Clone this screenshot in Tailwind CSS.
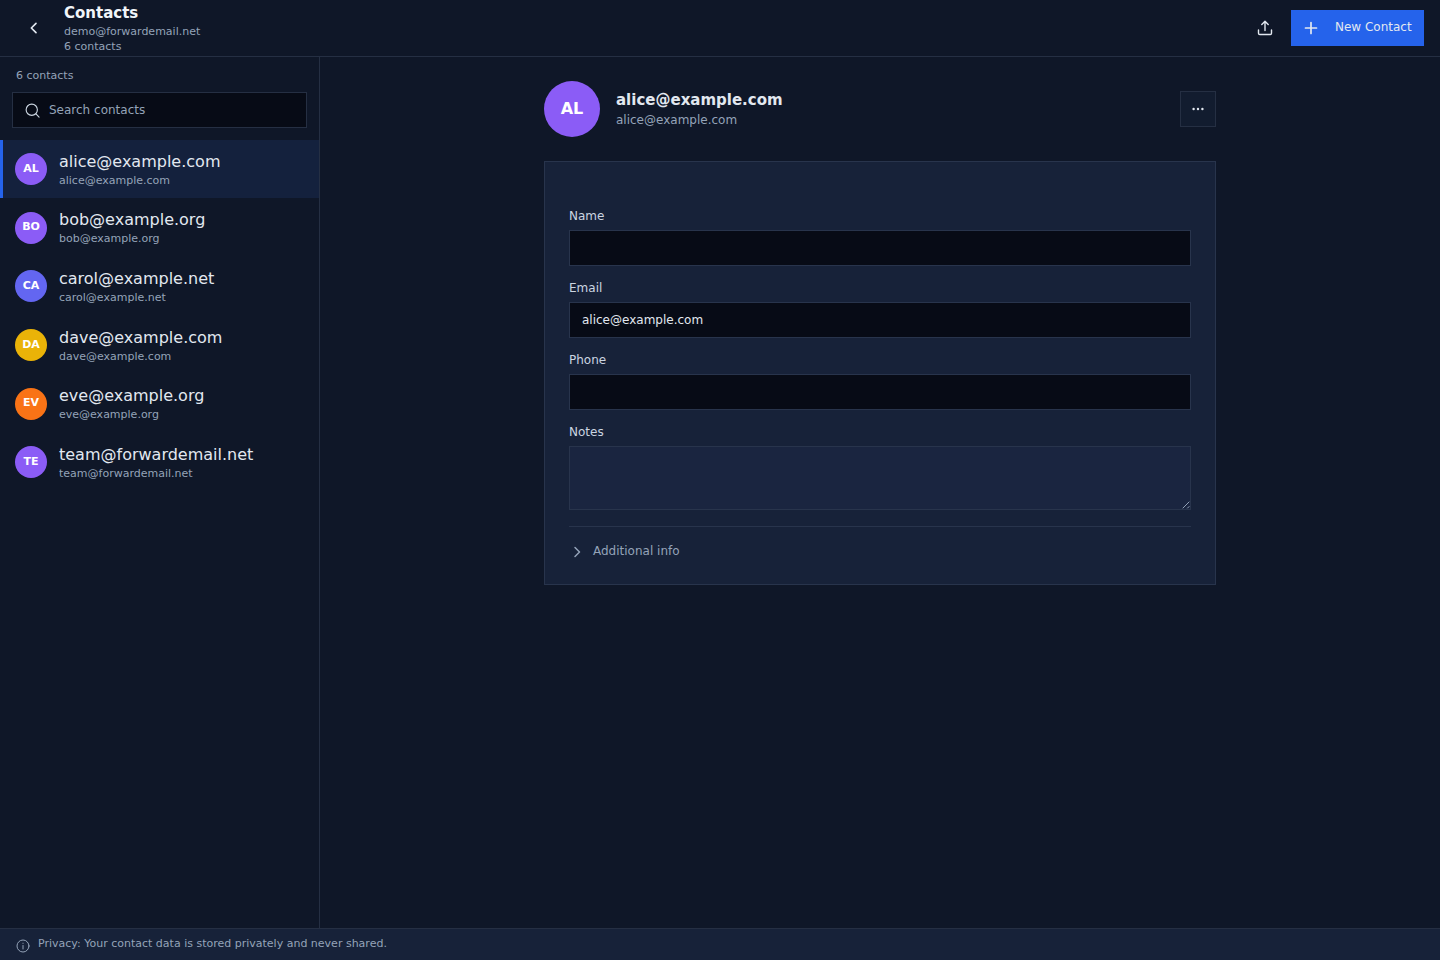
<!DOCTYPE html>
<html>
<head>
<title>Contacts</title>
<meta charset="UTF-8" />
<script src="https://cdn.jsdelivr.net/npm/@tailwindcss/browser@4"></script>
</head>
<body class="bg-[#0f1728] text-white font-['DejaVu_Sans',sans-serif]">
<div class="flex flex-col h-[960px] overflow-hidden">
    <!-- top bar -->
    <header class="flex items-center justify-between h-[57px] shrink-0 border-b border-[#252f43] pl-[16px] pr-[16px]">
        <div class="flex items-center">
            <button type="button" class="w-[36px] h-[36px] flex items-center justify-center text-[#e2e8f0]">
                <svg class="w-[16px] h-[16px]" viewBox="0 0 24 24" fill="none" stroke="currentColor" stroke-width="2.5" stroke-linecap="round" stroke-linejoin="round"><path d="M15 5l-7 7 7 7"/></svg>
            </button>
            <div class="ml-[12px] mb-[1px] flex flex-col">
                <h1 class="text-[15px] leading-[22px] font-bold text-[#f1f5f9]">Contacts</h1>
                <div class="text-[11px] leading-[15px] text-[#94a3b8]">demo@forwardemail.net</div>
                <div class="text-[11px] leading-[15px] text-[#94a3b8]">6 contacts</div>
            </div>
        </div>
        <div class="flex items-center">
            <button type="button" class="w-[36px] h-[36px] flex items-center justify-center text-[#e2e8f0] mr-[8px]">
                <svg class="w-[16px] h-[16px]" viewBox="0 0 16 16" fill="none" stroke="currentColor" stroke-width="1.4" stroke-linecap="round" stroke-linejoin="round"><path d="M8 10.5V1.5M4.8 4.5L8 1.3l3.2 3.2M1.5 10v3.2c0 .8.5 1.3 1.3 1.3h10.4c.8 0 1.3-.5 1.3-1.3V10"/></svg>
            </button>
            <button type="button" class="flex items-center h-[36px] w-[133px] bg-[#2563eb] text-[#e2e8f0] text-[12px] pl-[13px]">
                <svg class="w-[14px] h-[14px]" viewBox="0 0 14 14" fill="none" stroke="currentColor" stroke-width="1.7" stroke-linecap="round"><path d="M7 1.5v11M1.5 7h11"/></svg>
                <span class="ml-[17px] mb-[2px]">New Contact</span>
            </button>
        </div>
    </header>

    <div class="flex flex-1 min-h-0">
        <!-- sidebar -->
        <aside class="w-[320px] shrink-0 border-r border-[#252f43] flex flex-col">
            <div class="text-[11px] leading-[15px] text-[#94a3b8] pl-[16px] pt-[11px]">6 contacts</div>
            <div class="mx-[12px] mt-[9px] h-[36px] bg-[#070b16] border border-[#252f43] flex items-center pl-[12px]">
                <svg class="w-[15px] h-[15px] text-[#cbd5e1]" viewBox="0 0 16 16" fill="none" stroke="currentColor" stroke-width="1.2" stroke-linecap="round"><circle cx="7.2" cy="7.2" r="6"/><path d="M11.7 11.7l3.3 3.3"/></svg>
                <span class="ml-[9px] text-[12px] text-[#94a3b8]">Search contacts</span>
            </div>
            <ul class="mt-[11.67px]">
                <li class="flex items-center h-[58.67px] bg-[#14213d] border-l-[3px] border-[#2563eb] pl-[12px]">
                    <div class="w-[32px] h-[32px] rounded-full bg-[#8b5cf6] flex items-center justify-center text-[11px] font-bold">AL</div>
                    <div class="ml-[12px] mt-[0.67px]"><div class="text-[16px] leading-[22px] text-[#e2e8f0]">alice@example.com</div><div class="text-[11px] leading-[15px] text-[#94a3b8]">alice@example.com</div></div>
                </li>
                <li class="flex items-center h-[58.67px] pl-[15px]">
                    <div class="w-[32px] h-[32px] rounded-full bg-[#8b5cf6] flex items-center justify-center text-[11px] font-bold">BO</div>
                    <div class="ml-[12px] mt-[0.67px]"><div class="text-[16px] leading-[22px] text-[#e2e8f0]">bob@example.org</div><div class="text-[11px] leading-[15px] text-[#94a3b8]">bob@example.org</div></div>
                </li>
                <li class="flex items-center h-[58.67px] pl-[15px]">
                    <div class="w-[32px] h-[32px] rounded-full bg-[#6366f1] flex items-center justify-center text-[11px] font-bold">CA</div>
                    <div class="ml-[12px] mt-[0.67px]"><div class="text-[16px] leading-[22px] text-[#e2e8f0]">carol@example.net</div><div class="text-[11px] leading-[15px] text-[#94a3b8]">carol@example.net</div></div>
                </li>
                <li class="flex items-center h-[58.67px] pl-[15px]">
                    <div class="w-[32px] h-[32px] rounded-full bg-[#eab308] flex items-center justify-center text-[11px] font-bold">DA</div>
                    <div class="ml-[12px] mt-[0.67px]"><div class="text-[16px] leading-[22px] text-[#e2e8f0]">dave@example.com</div><div class="text-[11px] leading-[15px] text-[#94a3b8]">dave@example.com</div></div>
                </li>
                <li class="flex items-center h-[58.67px] pl-[15px]">
                    <div class="w-[32px] h-[32px] rounded-full bg-[#f97316] flex items-center justify-center text-[11px] font-bold">EV</div>
                    <div class="ml-[12px] mt-[0.67px]"><div class="text-[16px] leading-[22px] text-[#e2e8f0]">eve@example.org</div><div class="text-[11px] leading-[15px] text-[#94a3b8]">eve@example.org</div></div>
                </li>
                <li class="flex items-center h-[58.67px] pl-[15px]">
                    <div class="w-[32px] h-[32px] rounded-full bg-[#8b5cf6] flex items-center justify-center text-[11px] font-bold">TE</div>
                    <div class="ml-[12px] mt-[0.67px]"><div class="text-[16px] leading-[22px] text-[#e2e8f0]">team@forwardemail.net</div><div class="text-[11px] leading-[15px] text-[#94a3b8]">team@forwardemail.net</div></div>
                </li>
            </ul>
        </aside>

        <!-- detail -->
        <main class="flex-1 min-w-0 pt-[24px]">
            <div class="w-[672px] mx-auto">
                <div class="flex items-center justify-between">
                    <div class="flex items-center">
                        <div class="w-[56px] h-[56px] rounded-full bg-[#8b5cf6] flex items-center justify-center text-[16px] font-bold">AL</div>
                        <div class="ml-[16px] mb-[1px]">
                            <div class="text-[15px] leading-[22px] font-bold text-[#e2e8f0]">alice@example.com</div>
                            <div class="mt-[1px] text-[12px] leading-[17px] text-[#94a3b8]">alice@example.com</div>
                        </div>
                    </div>
                    <button type="button" class="w-[36px] h-[36px] bg-[#121c2f] border border-[#252f43] flex items-center justify-center">
                        <svg class="w-[12px] h-[4px]" viewBox="0 0 12 4" fill="#e2e8f0"><circle cx="1.6" cy="2" r="1.2"/><circle cx="6" cy="2" r="1.2"/><circle cx="10.4" cy="2" r="1.2"/></svg>
                    </button>
                </div>
                <form class="mt-[24px] bg-[#172239] border border-[#28344c] px-[24px] pt-[46px] h-[424px]">
                    <label class="block text-[12px] leading-[16px] text-[#cbd5e1]">Name</label>
                    <div class="mt-[6px] h-[36px] bg-[#070b16] border border-[#28344c]"></div>
                    <label class="block mt-[14px] text-[12px] leading-[16px] text-[#cbd5e1]">Email</label>
                    <div class="mt-[6px] h-[36px] bg-[#070b16] border border-[#28344c] flex items-center pl-[12px] text-[12px] text-[#e2e8f0]">alice@example.com</div>
                    <label class="block mt-[14px] text-[12px] leading-[16px] text-[#cbd5e1]">Phone</label>
                    <div class="mt-[6px] h-[36px] bg-[#070b16] border border-[#28344c]"></div>
                    <label class="block mt-[14px] text-[12px] leading-[16px] text-[#cbd5e1]">Notes</label>
                    <div class="mt-[6px] h-[64px] bg-[#1a2540] border border-[#28344c] relative">
                        <svg class="absolute right-0 bottom-0 w-[10px] h-[10px]" viewBox="0 0 10 10" stroke="#94a3b8" stroke-width="1" fill="none"><path d="M2.7 9.3L9.3 2.7M7.3 9.3L9.3 7.3"/></svg>
                    </div>
                    <div class="mt-[16px] border-t border-[#28344c] pt-[16px] flex items-center text-[#94a3b8]">
                        <svg class="w-[14px] h-[14px] mt-[1px] ml-[1px]" viewBox="0 0 14 14" fill="none" stroke="currentColor" stroke-width="1.5" stroke-linecap="round" stroke-linejoin="round"><path d="M5 2.5L9.5 7 5 11.5"/></svg>
                        <span class="ml-[9px] text-[12px] leading-[17px]">Additional info</span>
                    </div>
                </form>
            </div>
        </main>
    </div>

    <footer class="h-[32px] shrink-0 bg-[#172239] border-t border-[#252f43] flex items-center pl-[16px] text-[#94a3b8]">
        <svg class="w-[14px] h-[14px] mt-[2px]" viewBox="0 0 14 14" fill="none" stroke="currentColor" stroke-width="1" stroke-linecap="round"><circle cx="7" cy="7" r="6"/><path d="M7 6.5v3.5M7 4.2v.2"/></svg>
        <span class="ml-[8px] text-[11px]">Privacy: Your contact data is stored privately and never shared.</span>
    </footer>
</div>
</body>
</html>
